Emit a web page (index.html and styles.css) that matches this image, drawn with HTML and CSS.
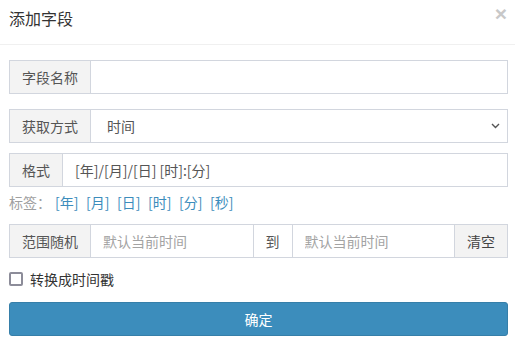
FILE: index.html
```html
<!DOCTYPE html>
<html lang="zh-CN">
<head>
<meta charset="utf-8">
<title>添加字段</title>
<link rel="stylesheet" href="styles.css">
</head>
<body>
<div class="modal">
  <div class="modal-header">
    <h4 class="modal-title">添加字段</h4>
    <span class="close">×</span>
  </div>
  <div class="modal-body">
    <div class="input-group">
      <span class="addon">字段名称</span>
      <input class="control" type="text" value="">
    </div>
    <div class="input-group gap-lg">
      <span class="addon">获取方式</span>
      <div class="control select">
        <span>时间</span>
        <svg class="chev" width="9" height="6" viewBox="0 0 9 6"><path d="M1 1l3.5 3.5L8 1" fill="none" stroke="#555" stroke-width="1.4"/></svg>
      </div>
    </div>
    <div class="input-group gap-sm">
      <span class="addon">格式</span>
      <input class="control fmt" type="text" value="[年]/[月]/[日] [时]:[分]">
    </div>
    <div class="tags">
      <span class="tags-label">标签：</span>
      <a class="tag">[年]</a>
      <a class="tag">[月]</a>
      <a class="tag">[日]</a>
      <a class="tag">[时]</a>
      <a class="tag">[分]</a>
      <a class="tag">[秒]</a>
    </div>
    <div class="input-group range">
      <span class="addon">范围随机</span>
      <input class="control" type="text" placeholder="默认当前时间">
      <span class="addon white">到</span>
      <input class="control" type="text" placeholder="默认当前时间">
      <span class="addon btn-clear">清空</span>
    </div>
    <label class="check">
      <span class="box"></span>
      <span>转换成时间戳</span>
    </label>
    <button class="btn-primary" type="button">确定</button>
  </div>
</div>
</body>
</html>
```

FILE: styles.css
```css
* { box-sizing: border-box; }
html, body {
  margin: 0;
  padding: 0;
  background: #fff;
  font-family: "Noto Sans CJK SC", "Noto Sans", "Liberation Sans", sans-serif;
  font-size: 14px;
  color: #333;
}
.modal {
  width: 515px;
  height: 346px;
  background: #fff;
}
.modal-header {
  height: 45px;
  border-bottom: 1px solid #f0f0f0;
  display: flex;
  align-items: flex-start;
  justify-content: space-between;
  padding: 6px 8px 0 9px;
}
.modal-title {
  margin: 0;
  font-size: 16px;
  font-weight: normal;
  line-height: 24px;
  color: #333;
}
.close {
  font-size: 21px;
  font-weight: bold;
  line-height: 18px;
  color: #c8c8c8;
  margin-top: -1px;
  font-family: "Liberation Sans", "DejaVu Sans", sans-serif;
}
.modal-body {
  padding: 15px 7px 0 9px;
}
.input-group {
  display: flex;
  height: 34px;
  border: 1px solid #d2d6de;
}
.gap-lg { margin-top: 15px; }
.gap-sm { margin-top: 10px; }
.addon {
  flex: none;
  display: flex;
  align-items: center;
  padding: 0 12px;
  background: #f3f3f3;
  color: #555;
  border-right: 1px solid #d2d6de;
  white-space: nowrap;
}
.addon.white { background: #fff; }
.btn-clear {
  border-right: none;
  color: #444;
}
.control {
  flex: 1;
  min-width: 0;
  height: 100%;
  border: none;
  outline: none;
  padding: 0 12px;
  font-family: inherit;
  font-size: 14px;
  color: #555;
  background: #fff;
}
.control::placeholder { color: #a3a3a3; }
.range .control { border-right: 1px solid #d2d6de; }
.select {
  display: flex;
  align-items: center;
  justify-content: space-between;
  padding: 0 7px 0 16px;
}
.chev { display: block; }
.tags {
  margin-top: 5px;
  height: 20px;
  line-height: 20px;
  display: flex;
  align-items: center;
  font-size: 14px;
}
.tags-label {
  color: #a0a0a0;
  width: 46px;
}
.tag {
  color: #3c8dbc;
  width: 31px;
  cursor: pointer;
}
.range { margin-top: 12px; }
.check {
  display: flex;
  align-items: center;
  margin-top: 11px;
  height: 20px;
  color: #333;
}
.box {
  width: 14px;
  height: 14px;
  border: 2px solid #8c8c99;
  border-radius: 2px;
  margin-right: 7px;
}
.btn-primary {
  display: block;
  width: 100%;
  height: 34px;
  margin-top: 13px;
  border: 1px solid #367fa9;
  border-radius: 3px;
  background: #3c8dbc;
  color: #fff;
  font-family: inherit;
  font-size: 14px;
}
```
